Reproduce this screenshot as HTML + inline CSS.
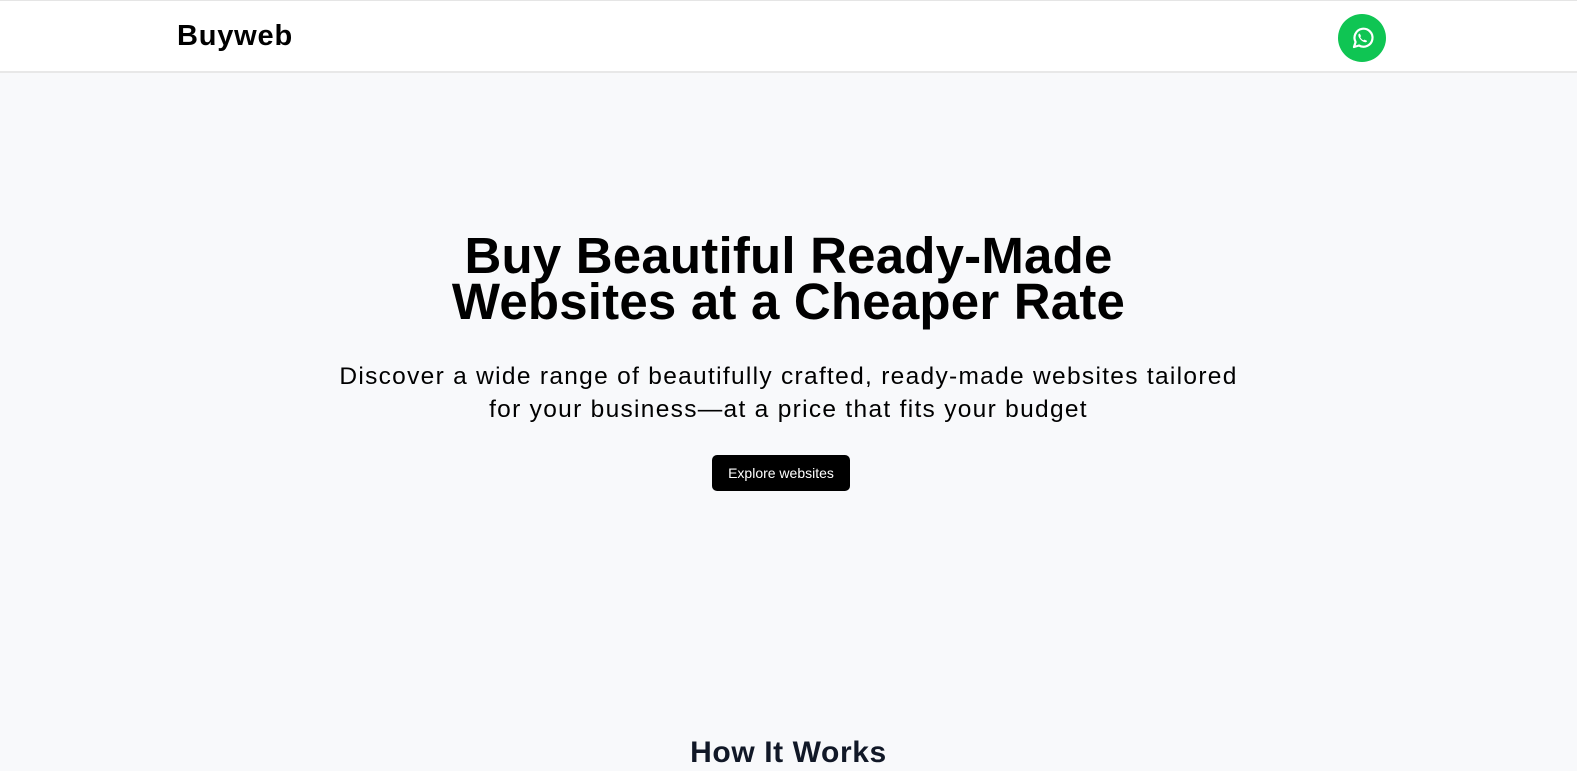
<!DOCTYPE html>
<html><head><meta charset="utf-8"><style>
*{margin:0;padding:0;box-sizing:border-box}
body{width:1577px;height:771px;overflow:hidden;background:#f8f9fb;font-family:"Liberation Sans",sans-serif;color:#000}
header{position:absolute;top:0;left:0;width:1577px;height:73px;background:#fff;border-top:1px solid #e5e5e5;border-bottom:2px solid #e8e8e8}
.logo{position:absolute;left:177px;top:19px;font-size:29px;font-weight:bold;letter-spacing:0.8px}
.wa{position:absolute;left:1338px;top:13px;width:48px;height:48px;border-radius:50%;background:#0fc553}
h1{position:absolute;top:233px;left:0;width:1577px;text-align:center;font-size:51px;line-height:46px;font-weight:bold;letter-spacing:0.2px}
p{position:absolute;top:360px;left:0;width:1577px;text-align:center;font-size:24.5px;line-height:33px;letter-spacing:1.3px}
.btn{position:absolute;left:712px;top:455px;width:138px;height:36px;background:#000;color:#fff;border-radius:5px;font-size:14px;text-align:center;line-height:36px}
h2{position:absolute;top:736px;left:0;width:1577px;text-align:center;font-size:30px;font-weight:bold;color:#111827;letter-spacing:0.6px}
</style></head><body>
<header><div class="logo">Buyweb</div>
<div class="wa"><svg width="48" height="48" viewBox="0 0 48 48"><path d="M16 33 L17.6 28 A9 9 0 1 1 21 31.5 Z" fill="none" stroke="#fff" stroke-width="2.2" stroke-linejoin="round"/><path d="M20.5 20.5c0.3-1 1.2-1.3 1.6-0.4l0.8 1.8c0.2 0.5-0.6 1.1-0.6 1.4 0.6 1.3 1.7 2.4 3 3 0.3 0 0.9-0.8 1.4-0.6l1.8 0.8c0.9 0.4 0.6 1.3-0.4 1.6-3 1-8.6-4.6-7.6-7.6z" fill="#fff"/></svg></div>
</header>
<h1>Buy Beautiful Ready-Made<br>Websites at a Cheaper Rate</h1>
<p>Discover a wide range of beautifully crafted, ready-made websites tailored<br>for your business—at a price that fits your budget</p>
<div class="btn">Explore websites</div>
<h2>How It Works</h2>
</body></html>
